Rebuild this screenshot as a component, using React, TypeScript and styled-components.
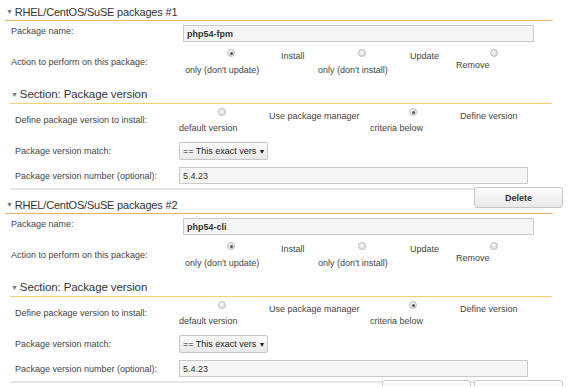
import React from 'react';
import styled, { createGlobalStyle } from 'styled-components';

const GlobalStyle = createGlobalStyle`
  body {
    margin: 0;
    background: #fff;
    font-family: "Liberation Sans", Arial, sans-serif;
    color: #444;
  }
`;

interface PackageProps {
  index: number;
  name: string;
  version: string;
  buttons: string[];
}

const Radio: React.FC<{ checked?: boolean; offset: number }> = ({ checked, offset }) => (
  <RadioDot $checked={!!checked} $offset={offset} />
);

const PackageBlock: React.FC<PackageProps> = ({ index, name, version, buttons }) => (
  <Block>
    <Header>
      <Arrow>▼</Arrow>RHEL/CentOS/SuSE packages #{index}
    </Header>

    <Row $cols={178} $top={4} $align="start">
      <Label $pad={6}>Package name:</Label>
      <TextInput $width={351} $bold readOnly value={name} />
    </Row>

    <Row $cols={178} $top={5} $align="start">
      <Label $pad={6} $padTop={9}>Action to perform on this package:</Label>
      <Options $shift={2} $padTop={3}>
        <Option $width={133}>
          <OptionLine>
            <RadioSlot $width={92}>
              <Radio checked offset={-1} />
            </RadioSlot>
            Install
          </OptionLine>
          <OptionRest $top={2}>only (don't update)</OptionRest>
        </Option>
        <Option $width={138}>
          <OptionLine>
            <RadioSlot $width={88}>
              <Radio offset={-1} />
            </RadioSlot>
            Update
          </OptionLine>
          <OptionRest $top={2}>only (don't install)</OptionRest>
        </Option>
        <Option $width={80}>
          <OptionLine>
            <RadioSlot $width={82}>
              <Radio offset={-1} />
            </RadioSlot>
          </OptionLine>
          <OptionRest $top={-3}>Remove</OptionRest>
        </Option>
      </Options>
    </Row>

    <Section>
      <SectionHeader>
        <Arrow>▼</Arrow>Section: Package version
      </SectionHeader>

      <Row $cols={169} $top={0} $align="start">
        <Label $pad={5} $padTop={10}>Define package version to install:</Label>
        <Options $shift={0} $padTop={6}>
          <Option $width={191}>
            <OptionLine>
              <RadioSlot $width={86}>
                <Radio offset={-2} />
              </RadioSlot>
              Use package manager
            </OptionLine>
            <OptionRest $top={0}>default version</OptionRest>
          </Option>
          <Option $width={160}>
            <OptionLine>
              <RadioSlot $width={86}>
                <Radio checked offset={-2} />
              </RadioSlot>
              Define version
            </OptionLine>
            <OptionRest $top={0}>criteria below</OptionRest>
          </Option>
        </Options>
      </Row>

      <Row $cols={169} $top={8} $align="center">
        <Label $pad={5}>Package version match:</Label>
        <FakeSelect>
          <SelectText>== This exact vers</SelectText>
          <SelectArrow>▼</SelectArrow>
        </FakeSelect>
      </Row>

      <Row $cols={169} $top={7} $align="center">
        <Label $pad={5}>Package version number (optional):</Label>
        <TextInput $width={349} readOnly value={version} />
      </Row>

      <Footer>
        {buttons.map((b) => (
          <Button key={b}>{b}</Button>
        ))}
      </Footer>
    </Section>
  </Block>
);

export default function App() {
  return (
    <>
      <GlobalStyle />
      <Page>
        <PackageBlock index={1} name="php54-fpm" version="5.4.23" buttons={['Delete']} />
        <PackageBlock index={2} name="php54-cli" version="5.4.23" buttons={['Add', 'Delete']} />
      </Page>
    </>
  );
}

const Page = styled.div`
  padding-left: 5px;
  width: 548px;
`;

const Block = styled.div``;

const Header = styled.div`
  display: flex;
  align-items: center;
  height: 16px;
  padding-top: 4px;
  line-height: 16px;
  border-bottom: 1px solid #edb45f;
  font-size: 11px;
  letter-spacing: -0.2px;
  color: #333;
  white-space: nowrap;
`;

const Arrow = styled.span`
  font-size: 7px;
  color: #777;
  margin: 0 2px 0 1px;
`;

const Row = styled.div<{ $cols: number; $top: number; $align: string }>`
  display: grid;
  grid-template-columns: ${(p) => p.$cols}px 1fr;
  align-items: ${(p) => p.$align};
  margin-top: ${(p) => p.$top}px;
`;

const Label = styled.div<{ $pad: number; $padTop?: number }>`
  padding-left: ${(p) => p.$pad}px;
  padding-top: ${(p) => p.$padTop || 0}px;
  font-size: 9px;
  line-height: 12px;
  color: #444;
  white-space: nowrap;
`;

const TextInput = styled.input<{ $width: number; $bold?: boolean }>`
  box-sizing: border-box;
  width: ${(p) => p.$width}px;
  height: 17px;
  margin: 0;
  padding: 0 3px;
  border: 1px solid #c9c9c9;
  background: #f5f5f5;
  font-family: "Liberation Sans", Arial, sans-serif;
  font-size: 9px;
  font-weight: ${(p) => (p.$bold ? 700 : 400)};
  color: #333;
  outline: none;
`;

const Options = styled.div<{ $shift: number; $padTop: number }>`
  display: flex;
  margin-left: ${(p) => p.$shift}px;
  padding-top: ${(p) => p.$padTop}px;
`;

const Option = styled.div<{ $width: number }>`
  width: ${(p) => p.$width}px;
  font-size: 9px;
  color: #444;
  white-space: nowrap;
`;

const OptionLine = styled.div`
  display: flex;
  align-items: flex-start;
  height: 12px;
  line-height: 12px;
`;

const RadioSlot = styled.div<{ $width: number }>`
  display: flex;
  justify-content: center;
  width: ${(p) => p.$width}px;
  margin-right: 4px;
`;

const RadioDot = styled.span<{ $checked: boolean; $offset: number }>`
  position: relative;
  top: ${(p) => p.$offset}px;
  box-sizing: border-box;
  width: 8px;
  height: 8px;
  border-radius: 50%;
  border: 1px solid #bdbdbd;
  background: radial-gradient(circle at 40% 35%, #f8f8f8, #d4d4d4);

  &::after {
    content: '';
    display: ${(p) => (p.$checked ? 'block' : 'none')};
    position: absolute;
    left: 1.5px;
    top: 1.5px;
    width: 3px;
    height: 3px;
    border-radius: 50%;
    background: #555;
  }
`;

const OptionRest = styled.div<{ $top: number }>`
  margin-top: ${(p) => p.$top}px;
  line-height: 12px;
`;

const Section = styled.div`
  margin: 10px 0 0 5px;
  width: 542px;
`;

const SectionHeader = styled.div`
  display: flex;
  align-items: center;
  height: 17px;
  line-height: 17px;
  border-bottom: 1px solid #f3d173;
  font-size: 11.5px;
  letter-spacing: -0.1px;
  color: #333;
  white-space: nowrap;
`;

const FakeSelect = styled.div`
  box-sizing: border-box;
  display: flex;
  align-items: center;
  width: 89px;
  height: 18px;
  padding: 0 4px 0 3px;
  border: 1px solid #c6c6c6;
  border-radius: 2px;
  background: linear-gradient(#fbfbfb, #e9e9e9);
  font-size: 9px;
  color: #222;
`;

const SelectText = styled.span`
  flex: 1;
  white-space: nowrap;
`;

const SelectArrow = styled.span`
  font-size: 7px;
  color: #222;
  margin-left: 2px;
`;

const Footer = styled.div`
  display: flex;
  justify-content: flex-end;
  gap: 3px;
  height: 3px;
  margin: 4px -11px 0 0;
  border-top: 2px solid #e4e4e4;
`;

const Button = styled.button`
  box-sizing: border-box;
  flex: none;
  width: 89px;
  height: 21px;
  margin-top: -3px;
  border: 1px solid #c8c8c8;
  border-radius: 3px;
  background: linear-gradient(#fdfdfd, #e8e8e8);
  font-family: "Liberation Sans", Arial, sans-serif;
  font-size: 9px;
  font-weight: 700;
  color: #333;
  cursor: pointer;
`;
